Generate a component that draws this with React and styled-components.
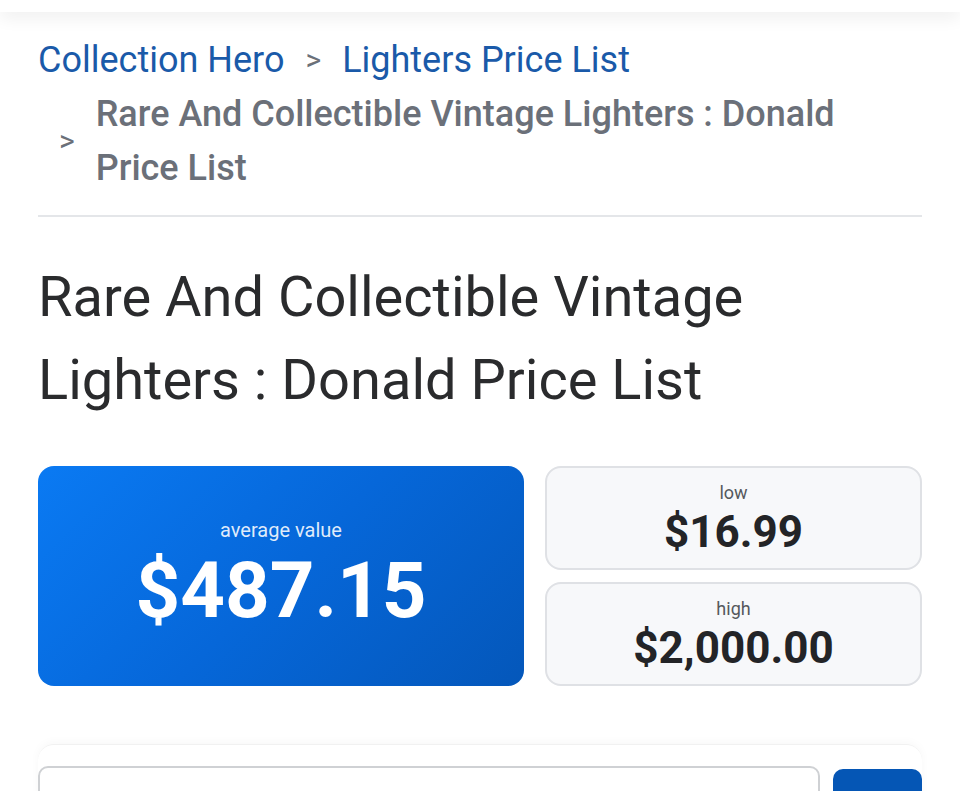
import React from 'react';
import styled, { createGlobalStyle } from 'styled-components';

const GlobalStyle = createGlobalStyle`
    html, body {
        margin: 0;
        padding: 0;
        background: #ffffff;
        font-family: Roboto, "Noto Sans", "Liberation Sans", sans-serif;
    }
    * {
        box-sizing: border-box;
    }
`;

const TopBar = styled.header`
    height: 12px;
    background: #ffffff;
    box-shadow: 0 4px 18px rgba(0, 0, 0, 0.09);
    position: relative;
    z-index: 2;
`;

const Page = styled.main`
    padding: 21px 38px 0;
`;

const Crumbs = styled.ol`
    list-style: none;
    margin: 0;
    padding: 0 0 20px;
    display: flex;
    flex-wrap: wrap;
    align-items: center;
    font-size: 36px;
    line-height: 54px;
    border-bottom: 2px solid #e4e6e9;
`;

const Crumb = styled.li`
    display: flex;
    align-items: center;
    color: ${({ current }) => (current ? '#6b7079' : '#1a5aa9')};
    font-weight: ${({ current }) => (current ? 500 : 400)};
`;

const Sep = styled.span`
    color: #6b7079;
    font-size: 30px;
    font-weight: 400;
    margin: 0 21px;
    flex-shrink: 0;
`;

const CrumbText = styled.span`
    max-width: 760px;
`;

const Title = styled.h1`
    margin: 39px 0 0;
    font-size: 56px;
    line-height: 83px;
    font-weight: 400;
    color: #2a2b2d;
`;

const Stats = styled.section`
    margin-top: 44px;
    display: grid;
    grid-template-columns: 486px 1fr;
    gap: 21px;
`;

const AverageCard = styled.div`
    height: 220px;
    border-radius: 16px;
    background: linear-gradient(135deg, #0a7af3 0%, #0667d9 50%, #0457ba 100%);
    display: flex;
    flex-direction: column;
    align-items: center;
    justify-content: center;
    color: #ffffff;
    padding-bottom: 4px;
`;

const Side = styled.div`
    display: flex;
    flex-direction: column;
    gap: 12px;
`;

const RangeCard = styled.div`
    height: 104px;
    border-radius: 16px;
    background: #f7f8fa;
    border: 2px solid #dfe1e5;
    display: flex;
    flex-direction: column;
    align-items: center;
    justify-content: center;
`;

const Label = styled.div`
    font-size: ${({ big }) => (big ? '20px' : '18px')};
    line-height: 1.2;
    color: ${({ big }) => (big ? 'rgba(255, 255, 255, 0.88)' : '#55585d')};
    margin-bottom: ${({ big }) => (big ? '10px' : '6px')};
`;

const Amount = styled.div`
    font-weight: 700;
    font-size: ${({ big }) => (big ? '78px' : '44px')};
    line-height: 1;
    color: ${({ big }) => (big ? '#ffffff' : '#232427')};
`;

const SearchPanel = styled.section`
    margin-top: 58px;
    border-top: 1px solid #f1f1f1;
    border-radius: 16px 16px 0 0;
    box-shadow: 0 -2px 10px rgba(0, 0, 0, 0.03);
    padding-top: 21px;
    display: flex;
    gap: 13px;
`;

const SearchInput = styled.input`
    flex: 1;
    height: 60px;
    border: 2px solid #cfd1d4;
    border-radius: 10px;
    background: #ffffff;
    font-size: 20px;
    font-family: inherit;
    padding: 0 16px;
`;

const SearchButton = styled.button`
    width: 89px;
    height: 60px;
    margin-top: 3px;
    border: none;
    border-radius: 10px;
    background: #0556b5;
`;

const crumbs = [
    { label: 'Collection Hero' },
    { label: 'Lighters Price List' },
];

export default function App() {
    return (
        <>
            <GlobalStyle />
            <TopBar />
            <Page>
                <Crumbs>
                    {crumbs.map((c, i) => (
                        <Crumb key={c.label}>
                            {i > 0 && <Sep>&gt;</Sep>}
                            <CrumbText>{c.label}</CrumbText>
                        </Crumb>
                    ))}
                    <Crumb current>
                        <Sep>&gt;</Sep>
                        <CrumbText>Rare And Collectible Vintage Lighters : Donald Price List</CrumbText>
                    </Crumb>
                </Crumbs>

                <Title>Rare And Collectible Vintage Lighters : Donald Price List</Title>

                <Stats>
                    <AverageCard>
                        <Label big>average value</Label>
                        <Amount big>$487.15</Amount>
                    </AverageCard>
                    <Side>
                        <RangeCard>
                            <Label>low</Label>
                            <Amount>$16.99</Amount>
                        </RangeCard>
                        <RangeCard>
                            <Label>high</Label>
                            <Amount>$2,000.00</Amount>
                        </RangeCard>
                    </Side>
                </Stats>

                <SearchPanel>
                    <SearchInput type="text" />
                    <SearchButton type="button" />
                </SearchPanel>
            </Page>
        </>
    );
}
